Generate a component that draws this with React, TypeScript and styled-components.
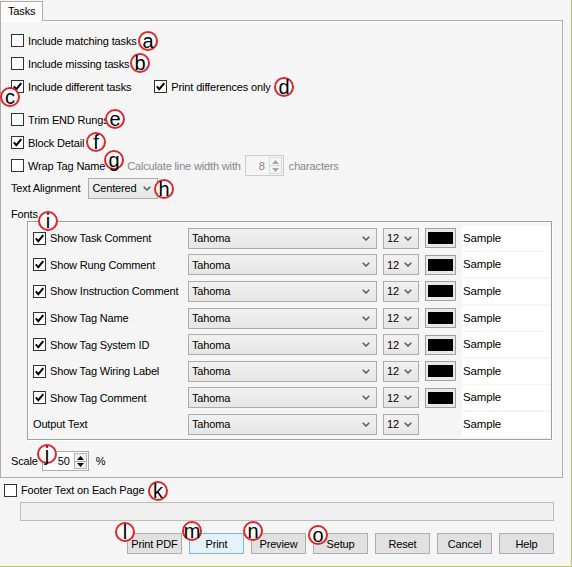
import React from "react";
import styled, { createGlobalStyle } from "styled-components";

const GlobalStyle = createGlobalStyle`
  html, body { margin: 0; padding: 0; background: #f5f5f5; }
  body { font-family: "Liberation Sans", Arial, sans-serif; font-size: 11px; letter-spacing: -0.15px; color: #000; }
`;

const Window = styled.div`
  position: relative;
  box-sizing: border-box;
  width: 572px;
  height: 567px;
  background: #f5f5f5;
  border-right: 1px solid #b5c45c;
  border-bottom: 1px solid #b5c45c;
  overflow: hidden;
`;

const TabStrip = styled.div`
  display: flex;
  align-items: flex-end;
  height: 20px;
`;

const Tab = styled.div`
  position: relative;
  z-index: 1;
  box-sizing: border-box;
  height: 20px;
  margin-bottom: -1px;
  padding: 0 7px 0 7px;
  line-height: 19px;
  border: 1px solid #adadad;
  border-bottom: none;
  background: #fbfbfb;
`;

const Panel = styled.div`
  box-sizing: border-box;
  width: 563px;
  height: 458px;
  border: 1px solid #adadad;
  box-shadow: inset 0 1px 0 #fff;
  padding: 8px 0 0 10px;
  display: flex;
  flex-direction: column;
`;

const Row = styled.div<{ $h?: number; $mt?: number }>`
  display: flex;
  align-items: center;
  height: ${(p) => p.$h ?? 23}px;
  margin-top: ${(p) => p.$mt ?? 0}px;
  white-space: nowrap;
`;

const CheckLabel = styled.label<{ $ml?: number }>`
  display: inline-flex;
  align-items: center;
  gap: 4px;
  margin-left: ${(p) => p.$ml ?? 0}px;
`;

const Box = styled.span`
  box-sizing: border-box;
  width: 13px;
  height: 13px;
  border: 1px solid #333;
  background: #fff;
  display: inline-flex;
  align-items: center;
  justify-content: center;
  flex: none;
`;

const Text = styled.span<{ $ml?: number; $dim?: boolean }>`
  margin-left: ${(p) => p.$ml ?? 0}px;
  color: ${(p) => (p.$dim ? "#858585" : "#000")};
`;

const Check = ({ checked, label }: { checked?: boolean; label: string }) => (
  <>
    <Box>
      {checked && (
        <svg width="11" height="11" viewBox="0 0 11 11">
          <path d="M1.8 5.4 L4.3 8.2 L9.3 2.2" stroke="#000" strokeWidth="2" fill="none" />
        </svg>
      )}
    </Box>
    <span>{label}</span>
  </>
);

const SpinBox = styled.div<{ $w: number; $h: number; $ml: number; $disabled?: boolean }>`
  box-sizing: border-box;
  display: flex;
  width: ${(p) => p.$w}px;
  height: ${(p) => p.$h}px;
  margin-left: ${(p) => p.$ml}px;
  border: 1px solid ${(p) => (p.$disabled ? "#cccccc" : "#acacac")};
  background: ${(p) => (p.$disabled ? "#f5f5f5" : "#fff")};
  color: ${(p) => (p.$disabled ? "#858585" : "#000")};
`;

const SpinValue = styled.div`
  flex: 1;
  display: flex;
  align-items: center;
  justify-content: flex-end;
  padding-right: 4px;
`;

const SpinButtons = styled.div<{ $disabled?: boolean }>`
  width: 11px;
  display: flex;
  flex-direction: column;
  margin: 1px 1px 1px 0;
  border: 1px solid ${(p) => (p.$disabled ? "#dadada" : "#b5b5b5")};
  background: ${(p) => (p.$disabled ? "#f5f5f5" : "#f0f0f0")};
`;

const SpinBtn = styled.div<{ $top?: boolean; $disabled?: boolean }>`
  flex: 1;
  display: flex;
  align-items: center;
  justify-content: center;
  border-top: ${(p) => (p.$top ? "none" : `1px solid ${p.$disabled ? "#dadada" : "#b5b5b5"}`)};
`;

const Spin = ({ value, w, h, ml, disabled }: { value: string; w: number; h: number; ml: number; disabled?: boolean }) => {
  const c = disabled ? "#a8a8a8" : "#000";
  return (
    <SpinBox $w={w} $h={h} $ml={ml} $disabled={disabled}>
      <SpinValue>{value}</SpinValue>
      <SpinButtons $disabled={disabled}>
        <SpinBtn $top $disabled={disabled}>
          <svg width="7" height="4" viewBox="0 0 7 4"><path d="M0 4 L3.5 0 L7 4 Z" fill={c} /></svg>
        </SpinBtn>
        <SpinBtn $disabled={disabled}>
          <svg width="7" height="4" viewBox="0 0 7 4"><path d="M0 0 L3.5 4 L7 0 Z" fill={c} /></svg>
        </SpinBtn>
      </SpinButtons>
    </SpinBox>
  );
};

const ComboBox = styled.div<{ $w: number; $ml?: number }>`
  box-sizing: border-box;
  width: ${(p) => p.$w}px;
  height: 21px;
  margin-left: ${(p) => p.$ml ?? 0}px;
  display: flex;
  align-items: center;
  padding: 0 6px 0 3px;
  border: 1px solid #acacac;
  background: linear-gradient(#f1f1f1, #e6e6e6);
  white-space: nowrap;
`;

const ComboText = styled.span`
  flex: 1;
`;

const Chevron = () => (
  <svg width="8" height="5" viewBox="0 0 8 5">
    <path d="M0.7 0.7 L4 4 L7.3 0.7" stroke="#5a5a5a" strokeWidth="1.5" fill="none" />
  </svg>
);

const Combo = ({ text, w, ml }: { text: string; w: number; ml?: number }) => (
  <ComboBox $w={w} $ml={ml}>
    <ComboText>{text}</ComboText>
    <Chevron />
  </ComboBox>
);

const GroupLabel = styled.div`
  height: 14px;
  line-height: 14px;
  margin-top: 8px;
`;

const GroupBox = styled.div`
  box-sizing: border-box;
  width: 525px;
  margin-left: 16px;
  border: 1px solid #a0a0a0;
  box-shadow: 1px 1px 0 #fff, inset 1px 1px 0 #fff;
  padding: 3px 0 1px 5px;
`;

const FontRow = styled.div`
  display: grid;
  grid-template-columns: 149px 189px 36px 31px 88px;
  column-gap: 6px;
  align-items: center;
  height: 26.6px;
  white-space: nowrap;
`;

const Swatch = styled.div`
  box-sizing: border-box;
  height: 20px;
  border: 1px solid #a0a0a0;
  background: #e9e9e9;
  padding: 3px 2px;
`;

const SwatchFill = styled.div`
  height: 100%;
  background: #000;
`;

const SampleCell = styled.div`
  height: 25px;
  line-height: 25px;
  background: #fff;
  padding-left: 1px;
  font-size: 11.5px;
`;

const Footer = styled.div`
  display: flex;
  flex-direction: column;
  padding: 5px 17px 0 4px;
`;

const TextField = styled.div`
  box-sizing: border-box;
  height: 19px;
  margin: 5px 0 0 16px;
  border: 1px solid #bdbdbd;
  background: #f0f0f0;
`;

const ButtonBar = styled.div`
  display: flex;
  justify-content: flex-end;
  gap: 7px;
  margin-top: 12px;
`;

const Button = styled.div<{ $default?: boolean }>`
  box-sizing: border-box;
  width: 55px;
  height: 21px;
  display: flex;
  align-items: center;
  justify-content: center;
  border: 1px solid ${(p) => (p.$default ? "#7eb4ea" : "#adadad")};
  background: ${(p) => (p.$default ? "#e5f1fb" : "#e1e1e1")};
`;

const Callout = styled.div<{ $x: number; $y: number }>`
  position: absolute;
  left: ${(p) => p.$x - 10}px;
  top: ${(p) => p.$y - 10}px;
  z-index: 5;
  box-sizing: border-box;
  width: 20px;
  height: 20px;
  border-radius: 50%;
  border: 2px solid #e2252b;
  background: radial-gradient(circle at 40% 35%, #ffffff 55%, #f1dada);
  display: flex;
  align-items: center;
  justify-content: center;
  font-family: "Liberation Sans", Arial, sans-serif;
  font-size: 20px;
  letter-spacing: 0;
  line-height: 20px;
  color: #000;
`;

const fontRows = [
  { label: "Show Task Comment", check: true },
  { label: "Show Rung Comment", check: true },
  { label: "Show Instruction Comment", check: true },
  { label: "Show Tag Name", check: true },
  { label: "Show Tag System ID", check: true },
  { label: "Show Tag Wiring Label", check: true },
  { label: "Show Tag Comment", check: true },
  { label: "Output Text", check: false },
];

const callouts: [string, number, number][] = [
  ["a", 148, 41],
  ["b", 140, 63],
  ["c", 10, 97],
  ["d", 284, 87],
  ["e", 115, 119],
  ["f", 96, 142],
  ["g", 114, 160],
  ["h", 164, 189],
  ["i", 48, 221],
  ["j", 47, 454],
  ["k", 158, 491],
  ["l", 125, 532],
  ["m", 192, 531],
  ["n", 253, 531],
  ["o", 318, 535],
];

export default function App() {
  return (
    <>
      <GlobalStyle />
      <Window>
        <TabStrip>
          <Tab>Tasks</Tab>
        </TabStrip>
        <Panel>
          <Row>
            <CheckLabel><Check label="Include matching tasks" /></CheckLabel>
          </Row>
          <Row>
            <CheckLabel><Check label="Include missing tasks" /></CheckLabel>
          </Row>
          <Row>
            <CheckLabel><Check checked label="Include different tasks" /></CheckLabel>
            <CheckLabel $ml={23}><Check checked label="Print differences only" /></CheckLabel>
          </Row>
          <Row $mt={10}>
            <CheckLabel><Check label="Trim END Rungs" /></CheckLabel>
          </Row>
          <Row>
            <CheckLabel><Check checked label="Block Detail" /></CheckLabel>
          </Row>
          <Row>
            <CheckLabel><Check label="Wrap Tag Name" /></CheckLabel>
            <Text $ml={22} $dim>Calculate line width with</Text>
            <Spin value="8" w={39} h={21} ml={4} disabled />
            <Text $ml={5} $dim>characters</Text>
          </Row>
          <Row $h={22}>
            <span>Text Alignment</span>
            <Combo text="Centered" w={70} ml={8} />
          </Row>
          <GroupLabel>Fonts</GroupLabel>
          <GroupBox>
            {fontRows.map((r) => (
              <FontRow key={r.label}>
                {r.check ? (
                  <CheckLabel><Check checked label={r.label} /></CheckLabel>
                ) : (
                  <span>{r.label}</span>
                )}
                <Combo text="Tahoma" w={189} />
                <Combo text="12" w={36} />
                {r.check ? (
                  <Swatch><SwatchFill /></Swatch>
                ) : (
                  <span />
                )}
                <SampleCell>Sample</SampleCell>
              </FontRow>
            ))}
          </GroupBox>
          <Row $h={21} $mt={11}>
            <span>Scale</span>
            <Spin value="50" w={47} h={20} ml={4} />
            <Text $ml={7}>%</Text>
          </Row>
        </Panel>
        <Footer>
          <Row $h={14}>
            <CheckLabel><Check label="Footer Text on Each Page" /></CheckLabel>
          </Row>
          <TextField />
          <ButtonBar>
            <Button>Print PDF</Button>
            <Button $default>Print</Button>
            <Button>Preview</Button>
            <Button>Setup</Button>
            <Button>Reset</Button>
            <Button>Cancel</Button>
            <Button>Help</Button>
          </ButtonBar>
        </Footer>
        {callouts.map(([l, x, y]) => (
          <Callout key={l} $x={x} $y={y}>{l}</Callout>
        ))}
      </Window>
    </>
  );
}
